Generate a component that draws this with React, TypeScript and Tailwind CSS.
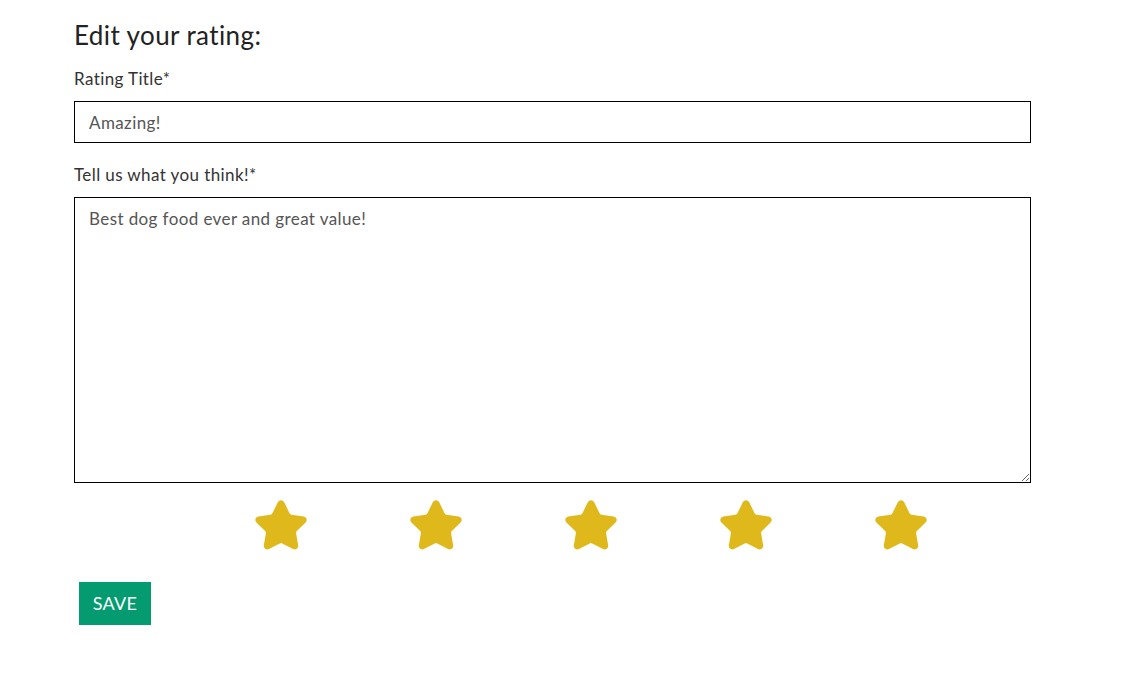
import { Star } from "lucide-react";

export default function App() {
  const stars = [1, 2, 3, 4, 5];

  return (
    <div className="min-h-screen bg-white font-['Lato','Noto_Sans',sans-serif] text-[#333]">
      <div className="w-[957px] ml-[74px] pt-[18px]">
        <h2 className="text-[26px] leading-[34px] tracking-[0.4px] text-[#222] mb-[15px]">Edit your rating:</h2>

        {/* Title */}
        <label className="block text-[17px] leading-[24px] tracking-[0.4px] mb-[10px]">Rating Title*</label>
        <input
          type="text"
          defaultValue="Amazing!"
          className="block w-full h-[42px] px-[14px] border border-black text-[17px] tracking-[0.4px] text-[#555] outline-none"
        />

        {/* Body */}
        <label className="block text-[17px] leading-[24px] tracking-[0.4px] mt-[20px] mb-[10px]">Tell us what you think!*</label>
        <textarea
          defaultValue="Best dog food ever and great value!"
          className="block w-full h-[286px] px-[14px] py-[9px] border border-black text-[17px] leading-[24px] tracking-[0.4px] text-[#555] outline-none"
        />

        {/* Stars */}
        <div className="flex gap-[99px] pl-[179px] mt-[15px]">
          {stars.map((s) => (
            <Star key={s} size={56} className="text-[#dfb91c]" fill="#dfb91c" strokeWidth={2} />
          ))}
        </div>

        <button className="ml-[5px] mt-[28px] w-[72px] h-[43px] bg-[#039b6f] text-white text-[18px] tracking-[0.3px]">SAVE</button>
      </div>
    </div>
  );
}
